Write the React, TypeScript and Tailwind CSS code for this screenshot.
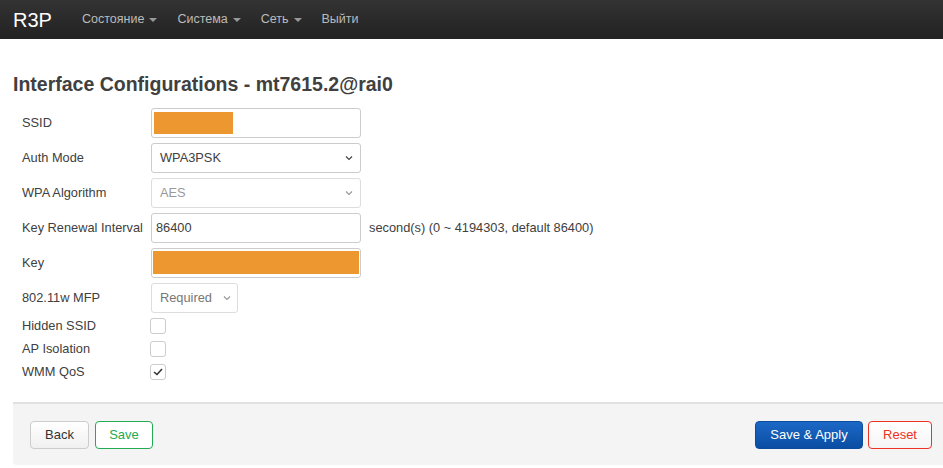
import React from 'react';

function Caret() {
    return <span className="inline-block ml-[5px] align-middle border-t-[4px] border-t-[#999] border-x-[4px] border-x-transparent" />;
}

function Chevron({ light }: { light?: boolean }) {
    return (
        <svg width="10" height="10" viewBox="0 0 10 10" className="shrink-0">
            <path d="M2 3.5 L5 6.5 L8 3.5" fill="none" stroke={light ? '#999' : '#444'} strokeWidth="1.2" />
        </svg>
    );
}

function Row({ label, children }: { label: string; children: React.ReactNode }) {
    return (
        <div className="flex items-center h-[30px] mb-[5px]">
            <div className="w-[138px] pl-[9px] text-[12.8px] text-[#404040]">{label}</div>
            {children}
        </div>
    );
}

function CheckRow({ label, checked }: { label: string; checked?: boolean }) {
    return (
        <div className="flex items-start h-[23px]">
            <div className="w-[137px] pl-[9px] text-[12.8px] leading-[16px] text-[#404040]">{label}</div>
            <div className="w-[16px] h-[16px] border border-[#ccc] rounded-[3px] bg-white flex items-center justify-center">
                {checked && (
                    <svg width="10" height="8" viewBox="0 0 10 8">
                        <path d="M1 4 L4 6.5 L9 1" fill="none" stroke="#333" strokeWidth="1.6" />
                    </svg>
                )}
            </div>
        </div>
    );
}

export default function App() {
    const menu = ['Состояние', 'Система', 'Сеть'];
    return (
        <div className="min-h-screen bg-white" style={{ fontFamily: '"Liberation Sans", Arial, sans-serif' }}>
            <div className="h-[39px] bg-gradient-to-b from-[#333] to-[#222] flex items-center">
                <div className="pl-[13px] w-[82px] text-[20px] text-white">R3P</div>
                <div className="flex items-center gap-[20px] text-[12.5px] text-[#bbb]">
                    {menu.map((m) => (
                        <span key={m}>{m}<Caret /></span>
                    ))}
                    <span>Выйти</span>
                </div>
            </div>

            <div className="pl-[13px]">
                <h2 className="pt-[33px] text-[19.5px] leading-[24px] font-bold text-[#404040]">Interface Configurations - mt7615.2@rai0</h2>

                <div className="mt-[12px]">
                    <Row label="SSID">
                        <div className="w-[210px] h-[30px] border border-[#ccc] rounded-[3px] bg-white pt-[3px] pl-[2px]">
                            <div className="w-[79px] h-[22px] bg-[#ec972f]" />
                        </div>
                    </Row>
                    <Row label="Auth Mode">
                        <div className="w-[210px] h-[30px] border border-[#ccc] rounded-[3px] bg-white flex items-center justify-between pl-[8px] pr-[6px] text-[12.8px] text-[#404040]">
                            <span>WPA3PSK</span><Chevron />
                        </div>
                    </Row>
                    <Row label="WPA Algorithm">
                        <div className="w-[210px] h-[30px] border border-[#ddd] rounded-[3px] bg-white flex items-center justify-between pl-[8px] pr-[6px] text-[12.8px] text-[#999]">
                            <span>AES</span><Chevron light />
                        </div>
                    </Row>
                    <Row label="Key Renewal Interval">
                        <div className="w-[210px] h-[30px] border border-[#ccc] rounded-[3px] bg-white flex items-center pl-[4px] text-[12.8px] text-[#404040]">86400</div>
                        <span className="ml-[8px] text-[12.8px] text-[#404040]">second(s) (0 ~ 4194303, default 86400)</span>
                    </Row>
                    <Row label="Key">
                        <div className="w-[210px] h-[30px] border border-[#ccc] rounded-[3px] bg-white pt-[2px] px-[1px]">
                            <div className="w-full h-[23px] bg-[#ec972f]" />
                        </div>
                    </Row>
                    <Row label="802.11w MFP">
                        <div className="w-[87px] h-[30px] border border-[#ddd] rounded-[3px] bg-white flex items-center justify-between pl-[8px] pr-[5px] text-[12.8px] text-[#777]">
                            <span>Required</span><Chevron light />
                        </div>
                    </Row>
                    <CheckRow label="Hidden SSID" />
                    <CheckRow label="AP Isolation" />
                    <CheckRow label="WMM QoS" checked />
                </div>

                <div className="mt-[15px] h-[63px] bg-[#f4f4f4] border-t-[2px] border-[#e0e0e0] rounded-bl-[4px] flex items-center justify-between pl-[17px] pr-[11px]">
                    <div className="flex gap-[6px]">
                        <button className="h-[28px] w-[59px] border border-[#ccc] rounded-[4px] bg-gradient-to-b from-white to-[#f0f0f0] text-[13px] text-[#333]">Back</button>
                        <button className="h-[28px] w-[58px] border border-[#22aa55] rounded-[4px] bg-white text-[13px] text-[#22aa55]">Save</button>
                    </div>
                    <div className="flex gap-[5px]">
                        <button className="h-[28px] w-[108px] border border-[#0b4c9c] rounded-[4px] bg-gradient-to-b from-[#1c68c6] to-[#0a4ea3] text-[13px] text-white">Save &amp; Apply</button>
                        <button className="h-[28px] w-[64px] border border-[#ee3322] rounded-[4px] bg-gradient-to-b from-white to-[#f5f5f5] text-[13px] text-[#ee3322]">Reset</button>
                    </div>
                </div>
            </div>
        </div>
    );
}
